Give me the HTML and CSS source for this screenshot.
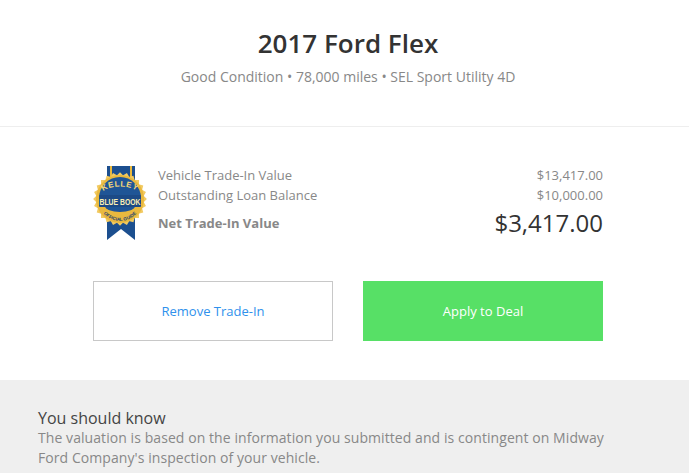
FILE: index.html
```html
<!DOCTYPE html>
<html lang="en">
<head>
<meta charset="utf-8">
<title>2017 Ford Flex</title>
<link rel="stylesheet" href="styles.css">
</head>
<body>
<header class="header">
  <h1 class="title">2017 Ford Flex</h1>
  <p class="subtitle">Good Condition • 78,000 miles • SEL Sport Utility 4D</p>
</header>
<main class="main">
  <section class="summary">
    <svg class="badge" width="54" height="76" viewBox="0 0 54 76" aria-label="Kelley Blue Book">
      <defs>
        <path id="arcTop" d="M9 28 A18 7.5 0 0 1 45 28"/>
        <path id="arcBottom" d="M5 33 A22 22 0 0 0 49 33"/>
      </defs>
      <path class="ribbon" d="M14 0H42V74L28 63L14 74Z"/>
      <path class="gold" d="M17 0H19V12H17ZM37 0H39V12H37Z"/>
      <g class="gold-light" transform="translate(27 33)">
        <rect x="-19" y="-19" width="38" height="38"/>
        <rect x="-19" y="-19" width="38" height="38" transform="rotate(15)"/>
        <rect x="-19" y="-19" width="38" height="38" transform="rotate(30)"/>
        <rect x="-19" y="-19" width="38" height="38" transform="rotate(45)"/>
        <rect x="-19" y="-19" width="38" height="38" transform="rotate(60)"/>
        <rect x="-19" y="-19" width="38" height="38" transform="rotate(75)"/>
      </g>
      <circle class="gold" cx="27" cy="33" r="24"/>
      <path class="disc" d="M6 32A21 21 0 0 1 48 32Z"/>
      <path class="disc" d="M12 40H42A15 6 0 0 1 12 40Z"/>
      <text class="badge-kelley"><textPath href="#arcTop" startOffset="50%" text-anchor="middle">KELLEY</textPath></text>
      <rect class="band" x="6" y="29" width="42" height="12" rx="1"/>
      <text class="badge-blue" transform="translate(27 38.5) scale(.76 1)" text-anchor="middle">BLUE BOOK</text>
      <text class="badge-guide"><textPath href="#arcBottom" startOffset="50%" text-anchor="middle">OFFICIAL GUIDE</textPath></text>
    </svg>
    <div class="rows">
      <div class="row"><span>Vehicle Trade-In Value</span><span>$13,417.00</span></div>
      <div class="row"><span>Outstanding Loan Balance</span><span>$10,000.00</span></div>
      <div class="row row-total"><span class="total-label">Net Trade-In Value</span><span class="total-value">$3,417.00</span></div>
    </div>
  </section>
  <div class="actions">
    <button class="btn btn-outline" type="button">Remove Trade-In</button>
    <button class="btn btn-primary" type="button">Apply to Deal</button>
  </div>
</main>
<footer class="note">
  <h2 class="note-title">You should know</h2>
  <p class="note-text">The valuation is based on the information you submitted and is contingent on Midway Ford Company's inspection of your vehicle.</p>
</footer>
</body>
</html>
```
FILE: styles.css
```css
html, body {
  margin: 0;
  padding: 0;
  height: 100%;
  background: #fff;
  overflow: hidden;
}
body {
  font-family: "Open Sans", "Liberation Sans", sans-serif;
  color: #888;
  font-size: 13px;
}
.header {
  height: 126px;
  padding-left: 7px;
  border-bottom: 1px solid #eeeeee;
  text-align: center;
}
.title {
  margin: 0;
  padding-top: 25px;
  font-size: 26px;
  line-height: 36px;
  font-weight: 600;
  color: #333;
}
.subtitle {
  margin: 6px 0 0;
  font-size: 14px;
  line-height: 20px;
  color: #888;
}
.main {
  padding: 39px 86px 39px 93px;
}
.summary {
  display: flex;
  align-items: flex-start;
  height: 76px;
}
.badge {
  flex: none;
  display: block;
  margin-right: 11px;
}
.ribbon { fill: #1c4f8f; }
.gold { fill: #e9b93f; }
.gold-light { fill: #f2ca62; }
.disc { fill: #1f5596; }
.band { fill: #1c4a86; }
.badge-kelley {
  font: 700 8px "Liberation Sans", sans-serif;
  fill: #f6d877;
  letter-spacing: .6px;
}
.badge-blue {
  font: 700 9px "Liberation Sans", sans-serif;
  fill: #fbeeb5;
}
.badge-guide {
  font: 700 4.6px "Liberation Sans", sans-serif;
  fill: #1c3f70;
}
.rows {
  flex: 1;
  margin-top: -1px;
}
.row {
  display: flex;
  justify-content: space-between;
  align-items: center;
  height: 20px;
  line-height: 20px;
}
.row-total {
  height: 36px;
}
.total-label {
  font-weight: 700;
}
.total-value {
  font-size: 24px;
  color: #333;
}
.actions {
  display: flex;
  gap: 30px;
  margin-top: 39px;
}
.btn {
  width: 240px;
  height: 60px;
  box-sizing: border-box;
  border-radius: 0;
  font-family: inherit;
  font-size: 13px;
  cursor: pointer;
}
.btn-outline {
  background: #fff;
  border: 1px solid #c8c8c8;
  color: #2f91ec;
}
.btn-primary {
  background: #57e066;
  border: 0;
  color: #fff;
}
.note {
  background: #efefef;
  height: 93px;
  padding: 28px 76px 0 38px;
  box-sizing: border-box;
}
.note-title {
  margin: 0;
  font-size: 16px;
  line-height: 20px;
  font-weight: 400;
  color: #444;
}
.note-text {
  margin: 0;
  font-size: 14px;
  line-height: 20px;
  letter-spacing: .07px;
  color: #888;
}
```
